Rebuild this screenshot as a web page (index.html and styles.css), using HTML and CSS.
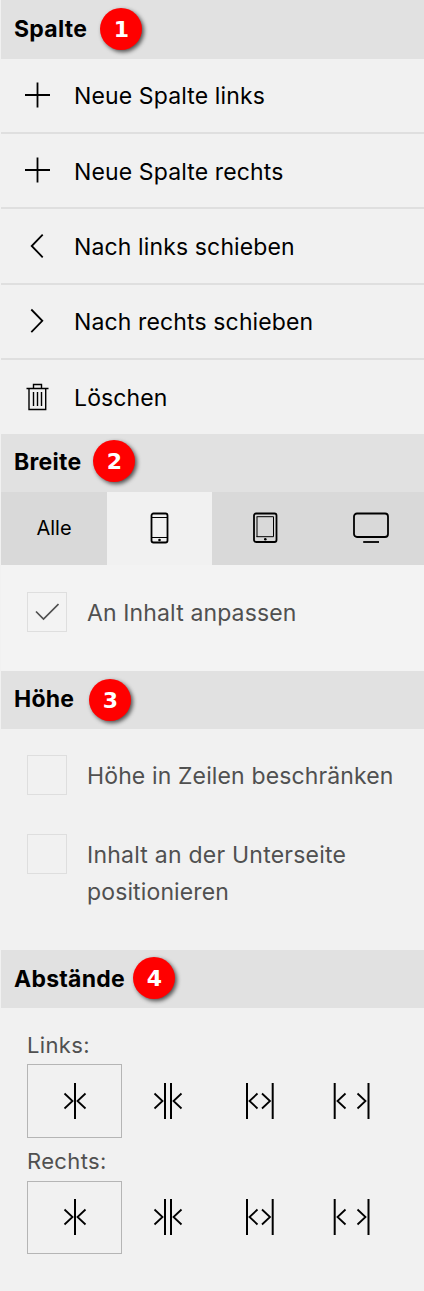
FILE: index.html
```html
<!DOCTYPE html>
<html lang="de">
<head>
<meta charset="utf-8">
<title>Spalte</title>
<link rel="stylesheet" href="styles.css">
</head>
<body>
<svg class="defs" width="0" height="0">
  <symbol id="gap-none" viewBox="0 0 40 36"><path d="M20 0V36" stroke-width="2"/><path d="M9.500 10.500L17.500 18L9.500 25.500M30.500 10.500L22.500 18L30.500 25.500" stroke-width="1.800"/></symbol>
  <symbol id="gap-small" viewBox="0 0 40 36"><path d="M17 0V36M23 0V36" stroke-width="2"/><path d="M6.500 10.500L14.500 18L6.500 25.500M33.500 10.500L25.500 18L33.500 25.500" stroke-width="1.800"/></symbol>
  <symbol id="gap-medium" viewBox="0 0 40 36"><path d="M7 0V36M32.700 0V36" stroke-width="2"/><path d="M17.500 10.500L9.500 18L17.500 25.500M22 10.500L30 18L22 25.500" stroke-width="1.800"/></symbol>
  <symbol id="gap-large" viewBox="0 0 40 36"><path d="M2.700 0V36M36.500 0V36" stroke-width="2"/><path d="M13.500 10.500L5.500 18L13.500 25.500M25.500 10.500L33.500 18L25.500 25.500" stroke-width="1.800"/></symbol>
</svg>
<main class="panel">
  <h2 class="heading first">Spalte<span class="badge b1">1</span></h2>
  <ul class="menu">
    <li class="item"><svg class="icon" viewBox="0 0 26 26"><path d="M1 12H26M13.500 -.5V24.500" stroke-width="1.800"/></svg><span>Neue Spalte links</span></li>
    <li class="item"><svg class="icon" viewBox="0 0 26 26"><path d="M1 12H26M13.500 -.5V24.500" stroke-width="1.800"/></svg><span>Neue Spalte rechts</span></li>
    <li class="item"><svg class="icon" viewBox="0 0 26 26"><path d="M18.700 .7L7.700 12L18.700 23.300" stroke-width="1.800"/></svg><span>Nach links schieben</span></li>
    <li class="item"><svg class="icon" viewBox="0 0 26 26"><path d="M7.300 .5L18.300 11.800L7.300 23.100" stroke-width="1.800"/></svg><span>Nach rechts schieben</span></li>
    <li class="item"><svg class="icon" viewBox="0 0 26 26"><path d="M2.500 3.500H24.500M9.500 3.500V-.5H17.500V3.500M5 3.500V24.500H21.700V3.500M9.500 7V21M13.500 7V21M17.500 7V21" stroke-width="1.400"/></svg><span>Löschen</span></li>
  </ul>
  <h2 class="heading">Breite<span class="badge b2">2</span></h2>
  <div class="tabs">
    <div class="tab">Alle</div>
    <div class="tab active"><svg width="36" height="32" viewBox="0 0 36 32"><rect x="9.500" y="1.500" width="16" height="29" rx="2" stroke-width="1.800"/><path d="M9.500 5.500H25.500M9.500 25.500H25.500" stroke-width="1"/><circle class="dot" cx="17.500" cy="28" r="1.300"/></svg></div>
    <div class="tab"><svg width="36" height="32" viewBox="0 0 36 32"><rect x="7" y="1.500" width="22.500" height="28.500" rx="2" stroke-width="1.800"/><path d="M10 5V25" stroke-width="2" stroke-opacity=".5"/><path d="M9.500 4.700H26.500V24.700H9.500" stroke-width="1"/><circle class="dot" cx="18.300" cy="27.300" r="1.300"/></svg></div>
    <div class="tab"><svg width="36" height="32" viewBox="0 0 36 32"><rect x="1" y="1.500" width="34" height="23.500" rx="3" stroke-width="1.800"/><path d="M10.200 30H26" stroke-width="1.800"/></svg></div>
  </div>
  <div class="options width-options">
    <label class="check"><span class="box"><svg width="24" height="18" viewBox="0 0 24 18"><path d="M1 8.500L8.500 16L23.500 1" stroke-width="1.700"/></svg></span><span>An Inhalt anpassen</span></label>
  </div>
  <h2 class="heading">Höhe<span class="badge b3">3</span></h2>
  <div class="options height-options">
    <label class="check"><span class="box"></span><span>Höhe in Zeilen beschränken</span></label>
    <label class="check"><span class="box"></span><span><span class="wide">Inhalt an der Unterseite</span><br>positionieren</span></label>
  </div>
  <h2 class="heading low">Abstände<span class="badge b4">4</span></h2>
  <div class="spacing">
    <div class="caption">Links:</div>
    <div class="gaps">
      <span class="gap chosen"><svg><use href="#gap-none"/></svg></span>
      <span class="gap"><svg><use href="#gap-small"/></svg></span>
      <span class="gap"><svg><use href="#gap-medium"/></svg></span>
      <span class="gap"><svg><use href="#gap-large"/></svg></span>
    </div>
    <div class="caption second">Rechts:</div>
    <div class="gaps short">
      <span class="gap chosen"><svg><use href="#gap-none"/></svg></span>
      <span class="gap"><svg><use href="#gap-small"/></svg></span>
      <span class="gap"><svg><use href="#gap-medium"/></svg></span>
      <span class="gap"><svg><use href="#gap-large"/></svg></span>
    </div>
  </div>
</main>
</body>
</html>
```
FILE: styles.css
```css
* { box-sizing: border-box; }
body { margin: 0; background: #f1f1f1; color: #000; font-family: Inter, "Liberation Sans", sans-serif; font-size: 23px; letter-spacing: .13px; }
svg { fill: none; stroke: #000; flex: none; }
.defs { position: absolute; }
.dot { fill: #000; stroke: none; }
.panel { height: 1291px; padding-left: 1px; overflow: hidden; }
.heading { display: flex; align-items: center; position: relative; height: 58px; margin: 0; padding: 0 0 2px 13px; background: #e1e1e1; font-size: 23px; font-weight: 700; line-height: 28px; letter-spacing: .25px; }
.heading.first { height: 59px; }
.heading.low { padding-bottom: 0; }
.badge { position: absolute; width: 42px; height: 42px; border-radius: 50%; background: #f00; color: #fff; font: 700 22px/43px "DejaVu Sans", sans-serif; letter-spacing: 0; text-align: center; box-shadow: 2px 2px 4px rgba(0, 0, 0, .65); }
.b1 { left: 99.400px; top: 8.400px; }
.b2 { left: 92.400px; top: 6.400px; }
.b3 { left: 88.400px; top: 8.400px; }
.b4 { left: 132.400px; top: 7.400px; }
.menu { display: grid; grid-template-rows: 75px 75px 76px 75px 1fr; height: 375px; margin: 0; padding: 0; list-style: none; }
.item { display: flex; align-items: center; gap: 24px; padding: 1px 0 0 23px; border-bottom: 2px solid #dfdfdf; line-height: 28px; }
.item:nth-child(2) { padding-top: 3px; }
.item:nth-child(2) .icon { margin-top: -2px; }
.item:last-child { padding-top: 2px; border-bottom: 0; }
.icon { width: 26px; height: 26px; overflow: visible; }
.tabs { display: grid; grid-template-columns: 106px 105px 106px 106px; height: 73px; background: #d9d9d9; font-size: 20px; letter-spacing: 0; }
.tab { display: flex; align-items: center; justify-content: center; padding-bottom: 1px; }
.active { background: #f1f1f1; }
.options { display: flex; flex-direction: column; padding-left: 26px; color: #505050; line-height: 37px; }
.width-options { height: 106px; padding-top: 27px; background: #f3f3f3; }
.height-options { height: 221px; padding-top: 26px; gap: 5px; }
.check { display: flex; align-items: flex-start; gap: 20px; min-height: 74px; padding: 0; }
.check > span:last-child { padding-top: 3px; }
.wide { letter-spacing: .23px; }
.box { display: flex; align-items: center; justify-content: center; width: 40px; height: 40px; border: 1px solid #dedede; }
.box svg { stroke: #505050; }
.spacing { padding: 20px 0 0 26px; color: #505050; }
.caption { height: 36px; font-size: 22px; line-height: 34px; letter-spacing: .35px; }
.caption.second { line-height: 32px; }
.gaps { display: grid; grid-template-columns: 95px 92px 92px 92px; height: 74px; margin-bottom: 7px; }
.gaps.short { height: 73px; }
.gap { display: flex; align-items: center; justify-content: center; }
.short .gap { padding-bottom: 1px; }
.gap svg { width: 40px; height: 36px; }
.chosen { border: 1px solid #b5b5b5; }
```
